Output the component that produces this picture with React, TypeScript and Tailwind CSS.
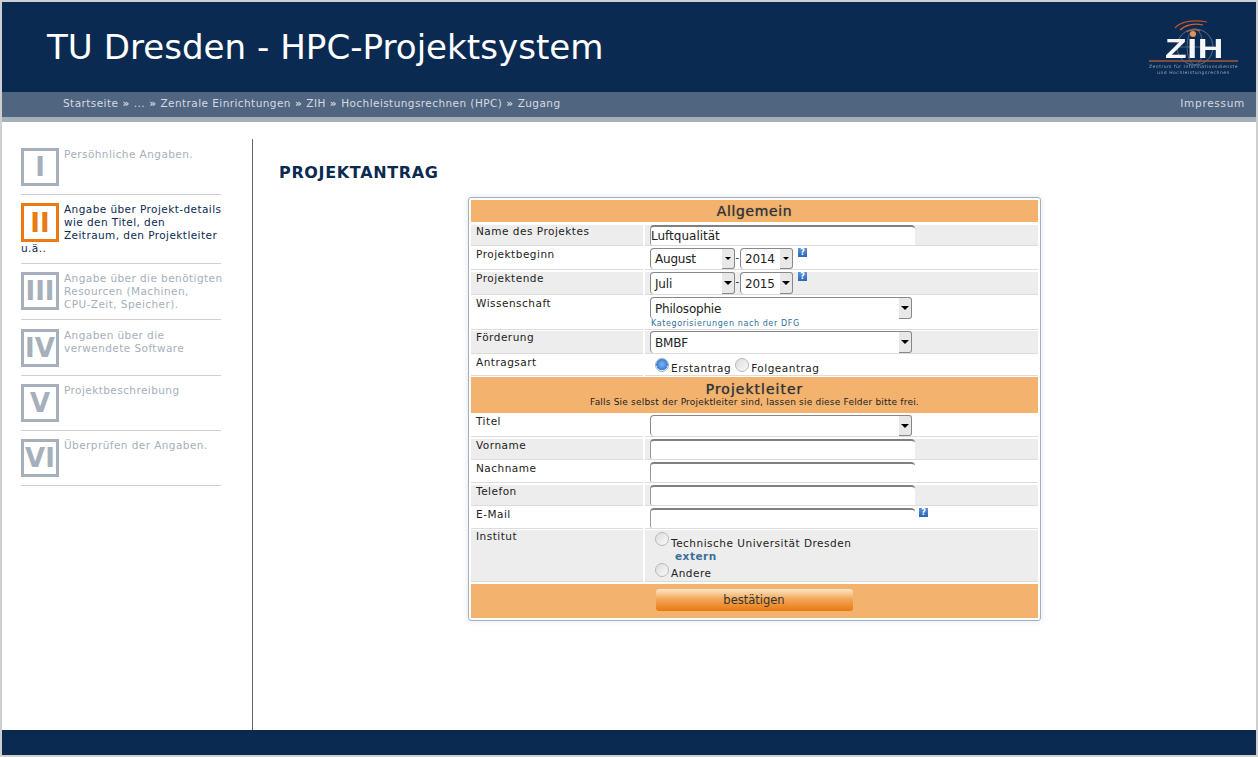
const Box = ({ n, active }: { n: string; active?: boolean }) => (
  <div className={`float-left mr-[5px] flex w-[38px] items-center justify-center border-[3px] font-['DejaVu_Sans'] text-[26px] leading-none font-bold tracking-normal ${active ? 'h-[39px] border-[#ea7a12] text-[#ea7a12]' : 'h-[38px] border-[#a5b0bb] text-[#a5b0bb]'}`}>
    {n}
  </div>
);

const Step = ({ n, text, active, cls }: { n: string; text: string; active?: boolean; cls: string }) => (
  <div className={`w-[200px] border-b border-[#d0d0d0] text-[10.5px] leading-[13px] tracking-[0.43px] whitespace-pre ${active ? 'text-[#0b2a52]' : 'text-[#a5b0bb]'} ${cls}`}>
    <Box n={n} active={active} />
    {text}
  </div>
);

const Select = ({ value, w, tall, big }: { value: string; w: string; tall?: boolean; big?: boolean }) => (
  <div className={`flex items-stretch ${tall ? 'h-[22px]' : 'h-[21px]'} ${w}`}>
    <div className={`flex-1 overflow-hidden rounded-tl-[4px] rounded-bl-[4px] border-t border-l border-[#888] bg-white pl-[4px] text-[12px] tracking-[-0.2px] text-[#222] ${tall ? 'leading-[23px]' : 'leading-[21px]'}`}>
      {value}
    </div>
    <div className="flex w-[13px] items-center justify-center rounded-r-[3px] border-t border-r border-b border-[#888] bg-[#e8e8e8]">
      <span className={`h-0 w-0 border-x-transparent border-t-black ${big ? 'border-x-[4px] border-t-[4px]' : 'border-x-[3px] border-t-[3px]'}`} />
    </div>
  </div>
);

const Input = ({ value = '' }: { value?: string }) => (
  <input
    readOnly
    value={value}
    className="block h-[20px] w-[265px] rounded-t-[4px] rounded-bl-[2px] border-t-2 border-l border-t-[#808080] border-l-[#999] bg-white pl-0 text-[12px] tracking-normal text-[#222] outline-none"
  />
);

const Help = ({ cls = '' }: { cls?: string }) => (
  <span className={`flex h-[9px] w-[9px] items-center justify-center bg-[linear-gradient(#5a94dc,#2a66b8)] font-['DejaVu_Sans'] text-[8px] leading-none font-bold tracking-normal text-white ${cls}`}>?</span>
);

const Radio = ({ checked, cls = '' }: { checked?: boolean; cls?: string }) => (
  <span className={`inline-block h-[14px] w-[14px] shrink-0 rounded-full border ${checked ? 'border-[#9db0c4] bg-[radial-gradient(circle_at_50%_45%,#7fb3ee_0%,#3c7fd6_62%,#e9edf2_66%)]' : 'border-[#b8b8b8] bg-[linear-gradient(135deg,#dcdcdc,#fafafa)]'} ${cls}`} />
);

const Row = ({ label, gray, cls, children }: { label: string; gray?: boolean; cls: string; children: React.ReactNode }) => (
  <div className={`flex gap-[2px] ${cls}`}>
    <div className={`w-[172px] border-b border-[#dcdcdc] pl-[5px] leading-[13px] ${gray ? 'bg-[#ededed]' : 'bg-white'}`}>{label}</div>
    <div className={`flex-1 border-b border-[#dcdcdc] pl-[5px] ${gray ? 'bg-[#ededed]' : 'bg-white'}`}>{children}</div>
  </div>
);

const Logo = () => (
  <svg width="94" height="60" viewBox="0 0 94 60" className="block blur-[0.3px]">
    <circle cx="49" cy="30" r="18" fill="none" stroke="#5b6f87" strokeWidth="1" />
    <ellipse cx="49" cy="30" rx="8" ry="18" fill="none" stroke="#4f6480" strokeWidth="1" />
    <path d="M31 30h36" stroke="#4f6480" strokeWidth="1" />
    <path d="M29 11C34 5 46 2 61 5" fill="none" stroke="#b9532a" strokeWidth="1.2" />
    <path d="M34 13C39 8 48 6 57 8" fill="none" stroke="#c9622e" strokeWidth="1.2" />
    <path d="M41 15C44 13 49 12 54 14" fill="none" stroke="#d6703a" strokeWidth="1" />
    <circle cx="47" cy="17" r="3" fill="#e59455" />
    <text x="48.5" y="41" textAnchor="middle" fill="#f4f6f8" fontFamily="'Liberation Sans', sans-serif" fontWeight="bold" fontSize="28" textLength="59" lengthAdjust="spacingAndGlyphs">ZIH</text>
    <path d="M3 44h89" stroke="#a8593a" strokeWidth="1.5" />
    <text x="47.5" y="51" textAnchor="middle" fill="#98a4b4" fontFamily="'DejaVu Sans', sans-serif" fontSize="4.4" textLength="89" lengthAdjust="spacingAndGlyphs">Zentrum für Informationsdienste</text>
    <text x="47.5" y="57" textAnchor="middle" fill="#98a4b4" fontFamily="'DejaVu Sans', sans-serif" fontSize="4.4" textLength="73" lengthAdjust="spacingAndGlyphs">und Hochleistungsrechnen</text>
  </svg>
);

const Sep = () => <span className="font-bold"> » </span>;

export default function App() {
  return (
    <div className="flex h-[757px] w-[1258px] flex-col overflow-hidden border-2 border-[#cfcfcf] bg-white font-['DejaVu_Sans',sans-serif] text-[10.5px] tracking-[0.5px] text-[#222]">
      <header className="flex h-[90px] shrink-0 items-center justify-between bg-[#0b2a52] pr-[16px] pl-[45px]">
        <h1 className="text-[34.12px] leading-none tracking-normal text-white">TU Dresden - HPC-Projektsystem</h1>
        <Logo />
      </header>
      <nav className="flex h-[30px] shrink-0 justify-between border-b-[5px] border-[#a5b0bb] bg-[#506580] pr-[11px] pl-[61px] leading-[23px] tracking-[0.43px] whitespace-pre text-[#d5dbe3]">
        <div>Startseite<Sep />...<Sep />Zentrale Einrichtungen<Sep />ZIH<Sep />Hochleistungsrechnen (HPC)<Sep />Zugang</div>
        <div className="tracking-[0.7px]">Impressum</div>
      </nav>
      <main className="flex min-h-0 flex-1 pt-[17px]">
        <aside className="flex w-[251px] shrink-0 flex-col border-r border-[#666] pt-[9px] pl-[19px]">
          <Step n="I" text="Persöhnliche Angaben." cls="h-[47px]" />
          <Step n="II" active text={"Angabe über Projekt-details\nwie den Titel, den\nZeitraum, den Projektleiter\nu.ä.."} cls="mt-[8px] h-[61px]" />
          <Step n="III" text={"Angabe über die benötigten\nResourcen (Machinen,\nCPU-Zeit, Speicher)."} cls="mt-[8px] h-[48px]" />
          <Step n="IV" text={"Angaben über die\nverwendete Software"} cls="mt-[9px] h-[47px]" />
          <Step n="V" text="Projektbeschreibung" cls="mt-[8px] h-[47px]" />
          <Step n="VI" text="Überprüfen der Angaben." cls="mt-[8px] h-[47px]" />
        </aside>
        <section className="min-w-0 flex-1 pt-[24px] pl-[26px]">
          <h2 className="text-[16px] leading-[19px] font-bold tracking-[0.65px] text-[#0b2a52]">PROJEKTANTRAG</h2>
          <div className="mt-[15px] ml-[189px] flex h-[424px] w-[573px] flex-col rounded-[3px] border border-[#a5b0bb] p-[2px] shadow-[0_0_6px_#dfe5ee]">
            <div className="h-[22px] bg-[#f3b36f] text-center text-[14px] leading-[22px] tracking-[0.6px] text-[#333] [text-shadow:0_0_1px_#555]">Allgemein</div>
            <Row label="Name des Projektes" gray cls="mt-[3px] h-[21px]"><Input value="Luftqualität" /></Row>
            <Row label="Projektbeginn" cls="mt-[2px] h-[22px]">
              <div className="flex items-start">
                <Select value="August" w="w-[85px]" />
                <span className="mt-[5px] w-[5px] text-center text-[10px] leading-none">-</span>
                <Select value="2014" w="w-[53px]" />
                <Help cls="ml-[5px]" />
              </div>
            </Row>
            <Row label="Projektende" gray cls="mt-[2px] h-[23px]">
              <div className="flex items-start">
                <Select value="Juli" w="w-[85px]" tall big />
                <span className="mt-[5px] w-[5px] text-center text-[10px] leading-none">-</span>
                <Select value="2015" w="w-[53px]" tall big />
                <Help cls="ml-[5px]" />
              </div>
            </Row>
            <Row label="Wissenschaft" cls="mt-[2px] h-[33px]">
              <Select value="Philosophie" w="w-[262px]" tall big />
              <div className="pl-[1px] text-[8px] leading-[10px] tracking-[0.6px] text-[#2f6f9c]">Kategorisierungen nach der DFG</div>
            </Row>
            <Row label="Förderung" gray cls="mt-[1px] h-[23px]"><Select value="BMBF" w="w-[262px]" tall big /></Row>
            <Row label="Antragsart" cls="mt-[2px] h-[20px]">
              <div className="flex items-start pl-[5px] leading-[13px]">
                <Radio checked cls="mt-[2px]" />
                <span className="mt-[6px] mr-[4px] ml-[2px]">Erstantrag</span>
                <Radio cls="mt-[2px]" />
                <span className="mt-[6px] ml-[2px]">Folgeantrag</span>
              </div>
            </Row>
            <div className="mt-[1px] h-[36px] bg-[#f3b36f] text-center">
              <div className="pt-[4px] text-[14px] leading-[16px] tracking-[1px] text-[#333] [text-shadow:0_0_1px_#555]">Projektleiter</div>
              <div className="text-[9px] leading-[11px] tracking-[0.2px]">Falls Sie selbst der Projektleiter sind, lassen sie diese Felder bitte frei.</div>
            </div>
            <Row label="Titel" cls="mt-[2px] h-[22px]"><Select value="" w="w-[262px]" big /></Row>
            <Row label="Vorname" gray cls="mt-[2px] h-[21px]"><Input /></Row>
            <Row label="Nachname" cls="mt-[2px] h-[21px]"><Input /></Row>
            <Row label="Telefon" gray cls="mt-[2px] h-[21px]"><Input /></Row>
            <Row label="E-Mail" cls="mt-[2px] h-[21px]">
              <div className="flex items-start">
                <Input />
                <Help cls="ml-[4px]" />
              </div>
            </Row>
            <Row label="Institut" gray cls="mt-[1px] h-[52px]">
              <div className="pl-[5px] leading-[13px]">
                <div className="flex items-start pt-[2px]"><Radio /><span className="mt-[5px] ml-[2px]">Technische Universität Dresden</span></div>
                <div className="pl-[20px] font-bold text-[#3a6f9c]">extern</div>
                <div className="flex items-start"><Radio /><span className="mt-[4px] ml-[2px]">Andere</span></div>
              </div>
            </Row>
            <div className="mt-[2px] flex h-[34px] items-start justify-center bg-[#f3b36f] pt-[5px] pr-[1px]">
              <button className="h-[22px] w-[197px] rounded-[3px] bg-[linear-gradient(#fbe6c9,#f3a85a_45%,#e8790f)] text-[11.5px] leading-[22px] tracking-normal text-[#333]">bestätigen</button>
            </div>
          </div>
        </section>
      </main>
      <footer className="h-[25px] shrink-0 bg-[#0b2a52]" />
    </div>
  );
}
